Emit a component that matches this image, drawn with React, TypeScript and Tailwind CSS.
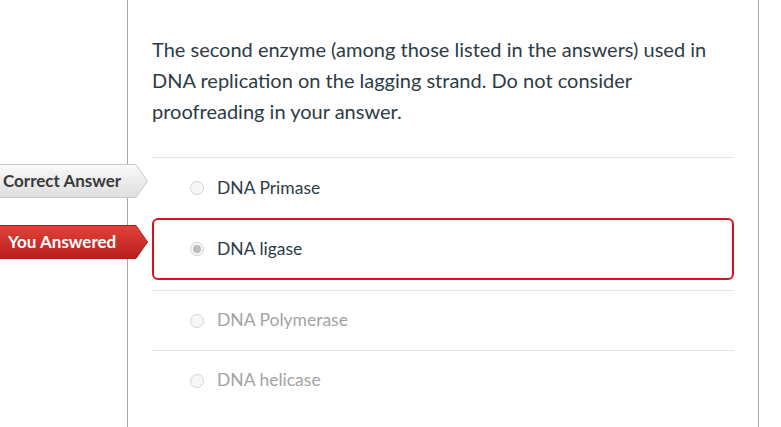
import React from "react";

type Answer = {
  text: string;
  state: "normal" | "chosen" | "muted";
  tag?: "correct" | "wrong";
};

const answers: Answer[] = [
  { text: "DNA Primase", state: "normal", tag: "correct" },
  { text: "DNA ligase", state: "chosen", tag: "wrong" },
  { text: "DNA Polymerase", state: "muted" },
  { text: "DNA helicase", state: "muted" },
];

function Tag({ kind }: { kind: "correct" | "wrong" }) {
  const isCorrect = kind === "correct";
  return (
    <div
      className={
        "absolute w-[148px] h-[34px] flex items-center " +
        (isCorrect ? "left-[-152px] top-[6px]" : "left-[-154px] top-[5px]")
      }
    >
      <svg className="absolute inset-0" width="148" height="34" viewBox="0 0 148 34">
        <defs>
          <linearGradient id={`g-${kind}`} x1="0" y1="0" x2="0" y2="1">
            {isCorrect ? (
              <>
                <stop offset="0" stopColor="#fafafa" />
                <stop offset="1" stopColor="#dedede" />
              </>
            ) : (
              <>
                <stop offset="0" stopColor="#e3423a" />
                <stop offset="1" stopColor="#b71f1d" />
              </>
            )}
          </linearGradient>
        </defs>
        <polygon
          points="-2,0.5 136,0.5 147.5,17 136,33.5 -2,33.5"
          fill={`url(#g-${kind})`}
          stroke={isCorrect ? "#c9c9c9" : "#b01b1a"}
          strokeWidth="1"
        />
      </svg>
      <span
        className={
          "relative font-bold text-[17px] " +
          (isCorrect ? "pl-[3px] text-[#3a3a3a]" : "pl-[8px] text-white")
        }
      >
        {isCorrect ? "Correct Answer" : "You Answered"}
      </span>
    </div>
  );
}

function Radio({ chosen }: { chosen: boolean }) {
  return (
    <span className="w-[14px] h-[14px] rounded-full border border-[#d4d4d4] bg-[#f7f7f7] flex items-center justify-center shrink-0">
      {chosen && <span className="w-[8px] h-[8px] rounded-full bg-[#bdbdbd]" />}
    </span>
  );
}

export default function App() {
  return (
    <div className="flex w-[781px] h-[427px] bg-white overflow-hidden font-['Lato',_sans-serif]">
      <div className="w-[127px] shrink-0" />
      <div className="w-[632px] shrink-0 border-l border-r border-[#a8a8a8] px-[24px] pt-[34px]">
        <p className="text-[20px] leading-[31px] text-[#2d3b45]">
          The second enzyme (among those listed in the answers) used in DNA replication on the lagging strand. Do not
          consider proofreading in your answer.
        </p>
        <div className="mt-[30px] border-t border-[#e2e2e2]">
          {answers.map((a) =>
            a.state === "chosen" ? (
              <div
                key={a.text}
                className="relative h-[62px] mb-[10px] border-2 border-[#d8141a] rounded-[6px] flex items-center gap-[13px] pl-[36px]"
              >
                {a.tag && <Tag kind={a.tag} />}
                <Radio chosen />
                <span className="text-[17.5px] text-[#2d3b45]">{a.text}</span>
              </div>
            ) : (
              <div
                key={a.text}
                className={
                  "relative h-[60px] flex items-center gap-[13px] pl-[38px] " +
                  (a.state === "muted" ? "border-t border-[#e2e2e2]" : "")
                }
              >
                {a.tag && <Tag kind={a.tag} />}
                <Radio chosen={false} />
                <span className={"text-[17.5px] " + (a.state === "muted" ? "text-[#a3a3a3]" : "text-[#2d3b45]")}>
                  {a.text}
                </span>
              </div>
            )
          )}
        </div>
      </div>
    </div>
  );
}
